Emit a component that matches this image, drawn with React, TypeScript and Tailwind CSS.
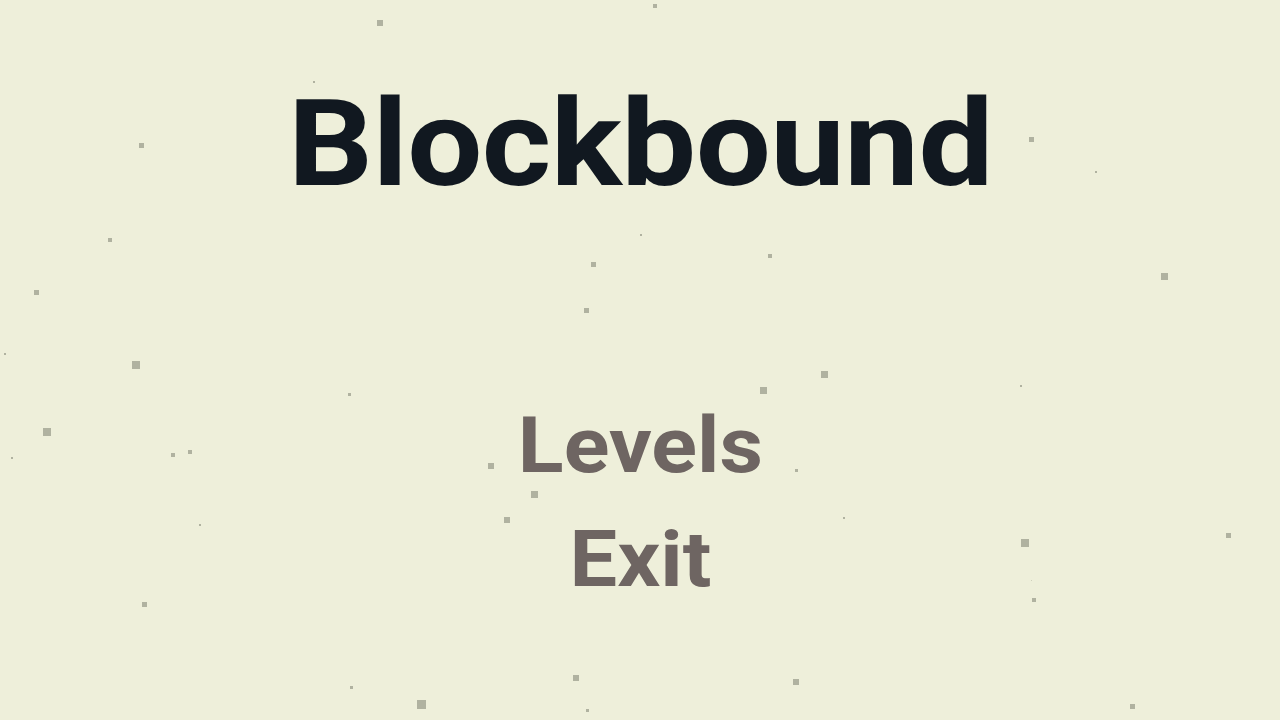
import React from "react";

type P = { x: number; y: number; s: number; o?: number };

const particles: P[] = [
  { x: 380, y: 23, s: 6 },
  { x: 655, y: 6, s: 4 },
  { x: 314, y: 82, s: 2 },
  { x: 141, y: 145, s: 5 },
  { x: 1031, y: 139, s: 5 },
  { x: 1096, y: 172, s: 2 },
  { x: 110, y: 240, s: 4 },
  { x: 641, y: 235, s: 2 },
  { x: 593, y: 264, s: 5 },
  { x: 770, y: 256, s: 4 },
  { x: 1164, y: 276, s: 7 },
  { x: 36, y: 292, s: 5 },
  { x: 586, y: 310, s: 5 },
  { x: 5, y: 354, s: 2 },
  { x: 136, y: 365, s: 8 },
  { x: 349, y: 394, s: 3 },
  { x: 763, y: 390, s: 7 },
  { x: 824, y: 374, s: 7 },
  { x: 1021, y: 386, s: 2 },
  { x: 47, y: 432, s: 8 },
  { x: 190, y: 452, s: 4 },
  { x: 173, y: 455, s: 4 },
  { x: 12, y: 458, s: 2 },
  { x: 491, y: 466, s: 6 },
  { x: 796, y: 470, s: 3 },
  { x: 534, y: 494, s: 7 },
  { x: 507, y: 520, s: 6 },
  { x: 844, y: 518, s: 2 },
  { x: 200, y: 525, s: 2 },
  { x: 1025, y: 543, s: 8 },
  { x: 1228, y: 535, s: 5 },
  { x: 1034, y: 600, s: 4 },
  { x: 144, y: 604, s: 5 },
  { x: 1031, y: 580, s: 1, o: 0.5 },
  { x: 576, y: 678, s: 6 },
  { x: 796, y: 682, s: 6 },
  { x: 351, y: 687, s: 3 },
  { x: 421, y: 704, s: 9 },
  { x: 587, y: 710, s: 3 },
  { x: 1132, y: 706, s: 5 },
];

export default function App() {
  return (
    <div
      className="relative w-[1280px] h-[720px] overflow-hidden bg-[#eeefda]"
      style={{ fontFamily: "Roboto, 'Liberation Sans', sans-serif" }}
    >
      {particles.map((p, i) => (
        <div
          key={i}
          className="absolute bg-[#b0b2a0]"
          style={{
            left: p.x - p.s / 2,
            top: p.y - p.s / 2,
            width: p.s,
            height: p.s,
            opacity: p.o ?? 1,
          }}
        />
      ))}
      <div className="relative flex flex-col items-center pt-[84px]">
        <h1 className="text-[120px] leading-none font-bold text-[#111820] tracking-[-0.5px] scale-x-[1.11]">
          Blockbound
        </h1>
        <div className="mt-[185px] flex flex-col items-center">
          <div className="text-[77px] leading-[114px] font-bold text-[#6e6562] scale-x-[1.1]">
            Levels
          </div>
          <div className="text-[77px] leading-[114px] font-bold text-[#6e6562] scale-x-[1.1]">
            Exit
          </div>
        </div>
      </div>
    </div>
  );
}
